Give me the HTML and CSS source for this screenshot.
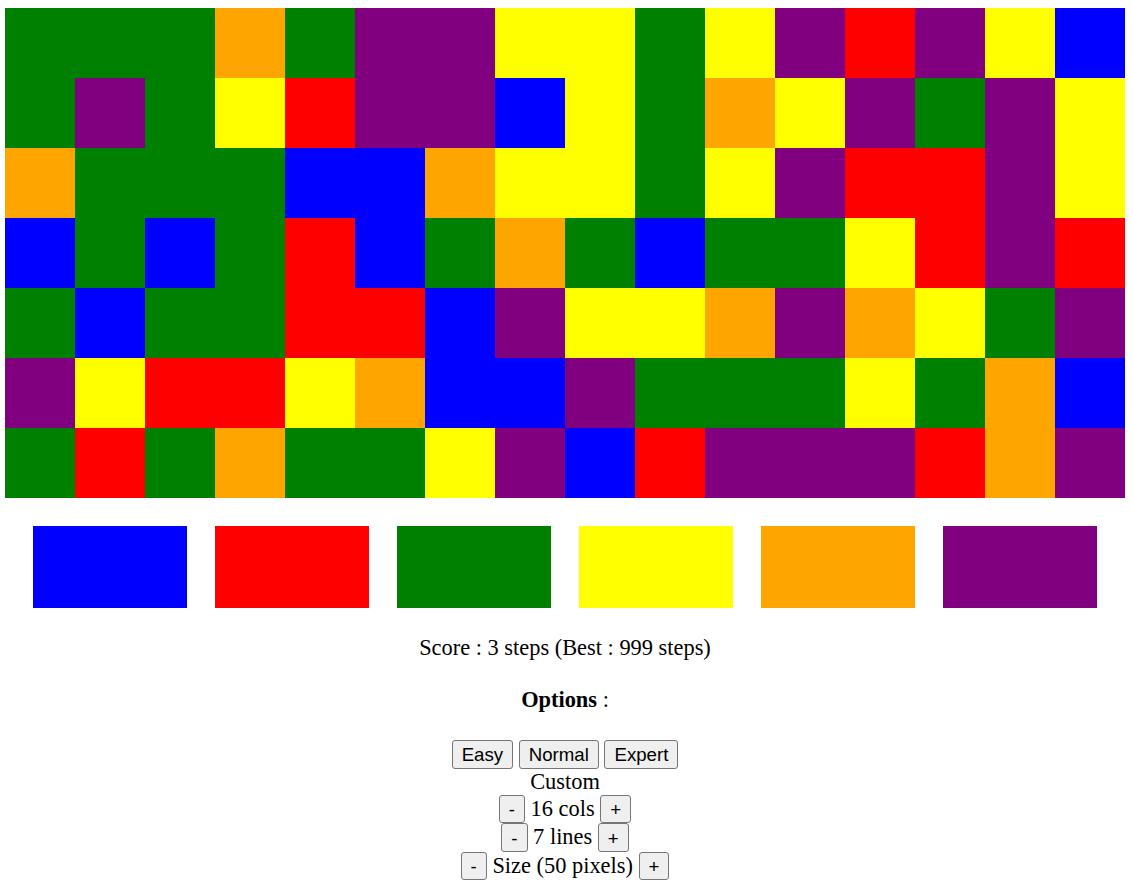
FILE: index.html
```html
<!DOCTYPE html>
<html>
<head>
<meta charset="utf-8">
<title>Flood It</title>
<link rel="stylesheet" href="styles.css">
</head>
<body>
<div class="page">
  <div class="board">
    <div class="c g"></div><div class="c g"></div><div class="c g"></div><div class="c o"></div><div class="c g"></div><div class="c p"></div><div class="c p"></div><div class="c y"></div><div class="c y"></div><div class="c g"></div><div class="c y"></div><div class="c p"></div><div class="c r"></div><div class="c p"></div><div class="c y"></div><div class="c b"></div>
    <div class="c g"></div><div class="c p"></div><div class="c g"></div><div class="c y"></div><div class="c r"></div><div class="c p"></div><div class="c p"></div><div class="c b"></div><div class="c y"></div><div class="c g"></div><div class="c o"></div><div class="c y"></div><div class="c p"></div><div class="c g"></div><div class="c p"></div><div class="c y"></div>
    <div class="c o"></div><div class="c g"></div><div class="c g"></div><div class="c g"></div><div class="c b"></div><div class="c b"></div><div class="c o"></div><div class="c y"></div><div class="c y"></div><div class="c g"></div><div class="c y"></div><div class="c p"></div><div class="c r"></div><div class="c r"></div><div class="c p"></div><div class="c y"></div>
    <div class="c b"></div><div class="c g"></div><div class="c b"></div><div class="c g"></div><div class="c r"></div><div class="c b"></div><div class="c g"></div><div class="c o"></div><div class="c g"></div><div class="c b"></div><div class="c g"></div><div class="c g"></div><div class="c y"></div><div class="c r"></div><div class="c p"></div><div class="c r"></div>
    <div class="c g"></div><div class="c b"></div><div class="c g"></div><div class="c g"></div><div class="c r"></div><div class="c r"></div><div class="c b"></div><div class="c p"></div><div class="c y"></div><div class="c y"></div><div class="c o"></div><div class="c p"></div><div class="c o"></div><div class="c y"></div><div class="c g"></div><div class="c p"></div>
    <div class="c p"></div><div class="c y"></div><div class="c r"></div><div class="c r"></div><div class="c y"></div><div class="c o"></div><div class="c b"></div><div class="c b"></div><div class="c p"></div><div class="c g"></div><div class="c g"></div><div class="c g"></div><div class="c y"></div><div class="c g"></div><div class="c o"></div><div class="c b"></div>
    <div class="c g"></div><div class="c r"></div><div class="c g"></div><div class="c o"></div><div class="c g"></div><div class="c g"></div><div class="c y"></div><div class="c p"></div><div class="c b"></div><div class="c r"></div><div class="c p"></div><div class="c p"></div><div class="c p"></div><div class="c r"></div><div class="c o"></div><div class="c p"></div>
  </div>

  <div class="palette">
    <div class="swatch b"></div>
    <div class="swatch r"></div>
    <div class="swatch g"></div>
    <div class="swatch y"></div>
    <div class="swatch o"></div>
    <div class="swatch p"></div>
  </div>

  <p class="score">Score : 3 steps (Best : 999 steps)</p>

  <p class="options-title"><b>Options</b> :</p>

  <div class="options">
    <button>Easy</button> <button>Normal</button> <button>Expert</button><br>
    Custom<br>
    <button>-</button> 16 cols <button>+</button><br>
    <button>-</button> 7 lines <button>+</button><br>
    <button>-</button> Size (50 pixels) <button>+</button>
  </div>
</div>
</body>
</html>
```

FILE: styles.css
```css
html, body {
  background: #ffffff;
}

body {
  margin: 8px 8px 8px 5px;
  font-family: "Liberation Serif", "Times New Roman", serif;
  font-size: 22.4px;
  color: #000000;
}

.page {
  text-align: center;
}

.board {
  display: grid;
  grid-template-columns: repeat(16, 70px);
  grid-auto-rows: 70px;
}

.palette {
  display: flex;
  justify-content: center;
  gap: 28px;
  margin-top: 28px;
}

.swatch {
  width: 154px;
  height: 82px;
}

.b { background: #0000ff; }
.r { background: #ff0000; }
.g { background: #008000; }
.y { background: #ffff00; }
.o { background: #ffa500; }
.p { background: #800080; }

.score {
  margin: 27px 0 0;
}

.options-title {
  margin: 26px 0 0;
}

.options {
  margin-top: 27px;
}

.options button {
  font-family: "Liberation Sans", Arial, sans-serif;
  font-size: 18.67px;
  line-height: normal;
  color: #000000;
  background: #efefef;
  border: 1px solid #767676;
  border-radius: 3px;
  padding: 3.4px 9px 1.2px;
  margin: 0;
  vertical-align: baseline;
}
```
